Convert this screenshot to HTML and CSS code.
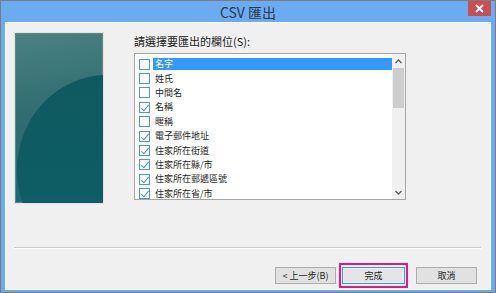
FILE: index.html
```html
<!DOCTYPE html>
<html lang="zh-Hant">
<head>
    <meta charset="UTF-8">
    <title>CSV 匯出</title>
    <link rel="stylesheet" href="styles.css">
</head>
<body>
    <div class="window">
        <div class="titlebar">
            <span class="title">CSV 匯出</span>
            <button class="close">
                <svg width="9" height="9" viewBox="0 0 9 9"><path d="M1 1L8 8M8 1L1 8" stroke="#fff" stroke-width="1.8"/></svg>
            </button>
        </div>
        <div class="client">
            <div class="top">
                <div class="wizard-art"><div class="arc"></div></div>
                <div class="fields">
                    <p class="label">請選擇要匯出的欄位(S):</p>
                    <div class="listbox">
                        <ul class="items">
                            <li class="selected"><span class="box"></span><span class="text">名字</span></li>
                            <li><span class="box"></span><span class="text">姓氏</span></li>
                            <li><span class="box"></span><span class="text">中間名</span></li>
                            <li><span class="box checked"></span><span class="text">名稱</span></li>
                            <li><span class="box"></span><span class="text">暱稱</span></li>
                            <li><span class="box checked"></span><span class="text">電子郵件地址</span></li>
                            <li><span class="box checked"></span><span class="text">住家所在街道</span></li>
                            <li><span class="box checked"></span><span class="text">住家所在縣/市</span></li>
                            <li><span class="box checked"></span><span class="text">住家所在郵遞區號</span></li>
                            <li><span class="box checked"></span><span class="text">住家所在省/市</span></li>
                        </ul>
                        <div class="scrollbar">
                            <span class="arrow">
                                <svg width="7" height="5" viewBox="0 0 7 5"><path d="M0.5 4L3.5 1L6.5 4" fill="none" stroke="#606060" stroke-width="1.4"/></svg>
                            </span>
                            <div class="track"><div class="thumb"></div></div>
                            <span class="arrow">
                                <svg width="7" height="5" viewBox="0 0 7 5"><path d="M0.5 1L3.5 4L6.5 1" fill="none" stroke="#606060" stroke-width="1.4"/></svg>
                            </span>
                        </div>
                    </div>
                </div>
            </div>
            <div class="separator"></div>
            <div class="buttons">
                <button class="btn">&lt; 上一步(B)</button>
                <span class="highlight"><button class="btn default">完成</button></span>
                <button class="btn">取消</button>
            </div>
        </div>
    </div>
</body>
</html>
```

FILE: styles.css
```css
* {
    margin: 0;
    padding: 0;
    box-sizing: border-box;
}
body {
    width: 496px;
    height: 293px;
    overflow: hidden;
    font-family: "Noto Sans CJK TC", "Noto Sans", sans-serif;
    font-size: 11px;
    color: #1e1e1e;
}
.window {
    width: 496px;
    height: 293px;
    border: 1px solid #7c7c7c;
    background: #6aabf2;
    display: flex;
    flex-direction: column;
    padding: 0 4px 2px 4px;
}
.titlebar {
    height: 21px;
    display: flex;
    justify-content: center;
    align-items: center;
    position: relative;
}
.title {
    font-size: 14px;
    color: #2a3a4a;
    margin-top: 1px;
}
.close {
    position: absolute;
    top: 0;
    right: 0;
    width: 23px;
    height: 15px;
    border: none;
    background: #c75050;
    display: flex;
    align-items: center;
    justify-content: center;
}
.client {
    flex: 1;
    background: #f0f0f0;
    border: 1px solid #f8fbff;
    padding: 9px 4px 0 8px;
    display: flex;
    flex-direction: column;
}
.top {
    display: flex;
}
.wizard-art {
    width: 90px;
    height: 172px;
    border: 1px solid #e2e2e2;
    box-shadow: inset 0 0 0 1px #5d8a8a;
    background: linear-gradient(170deg, #4b8282 0%, #2f6d71 45%, #1a6a75 100%);
    position: relative;
    overflow: hidden;
}
.arc {
    position: absolute;
    left: 2px;
    top: 42px;
    width: 180px;
    height: 190px;
    border-radius: 50%;
    background: linear-gradient(180deg, #0f5a60 0%, #0d5c64 60%, #136e7a 100%);
}
.fields {
    margin-left: 30px;
}
.label {
    margin-top: 2px;
    line-height: 15px;
    color: #202020;
}
.listbox {
    margin-top: 4px;
    width: 272px;
    height: 147px;
    border: 1px solid #a6a6a6;
    background: #fff;
    display: flex;
}
.items {
    list-style: none;
    flex: 1;
    padding-top: 3px;
    font-size: 9px;
}
.items li {
    height: 14.4px;
    display: flex;
    align-items: center;
    padding-left: 4px;
}
.box {
    flex: none;
    width: 11px;
    height: 11px;
    border: 1px solid #4a98d8;
    background: #fff;
    position: relative;
}
.box.checked::after {
    content: "";
    position: absolute;
    left: 3px;
    top: 0;
    width: 3px;
    height: 7px;
    border: solid #3f8fd2;
    border-width: 0 1.5px 1.5px 0;
    transform: rotate(40deg);
}
.text {
    margin-left: 3px;
    padding: 0 2px;
    line-height: 12px;
    flex: 1;
}
.selected .text {
    background: #3399ff;
    color: #fff;
}
.scrollbar {
    width: 13px;
    background: #f0f0f0;
    display: flex;
    flex-direction: column;
    align-items: center;
}
.arrow {
    height: 14px;
    display: flex;
    align-items: center;
    justify-content: center;
}
.track {
    flex: 1;
    width: 100%;
    padding: 0 1px;
}
.thumb {
    height: 40px;
    background: #cdcdcd;
}
.separator {
    margin-top: 43px;
    margin-right: 5px;
    height: 2px;
    border-top: 1px solid #c9c9c9;
    border-bottom: 1px solid #fff;
}
.buttons {
    margin-top: 14px;
    display: flex;
    justify-content: flex-end;
    align-items: center;
    padding-right: 9px;
}
.btn {
    width: 61px;
    height: 17px;
    border: 1px solid #adadad;
    background: #e1e1e1;
    font-family: inherit;
    font-size: 9px;
    color: #1e1e1e;
    line-height: 15px;
}
.btn.default {
    width: 63px;
    border-color: #3399ff;
    box-shadow: inset 0 0 0 1px #e8f2fc;
    background: #e5e5e5;
}
.highlight {
    margin: 0 8px 0 3px;
    border: 2px solid #e6168a;
    padding: 2px 1px;
    display: flex;
}
```
